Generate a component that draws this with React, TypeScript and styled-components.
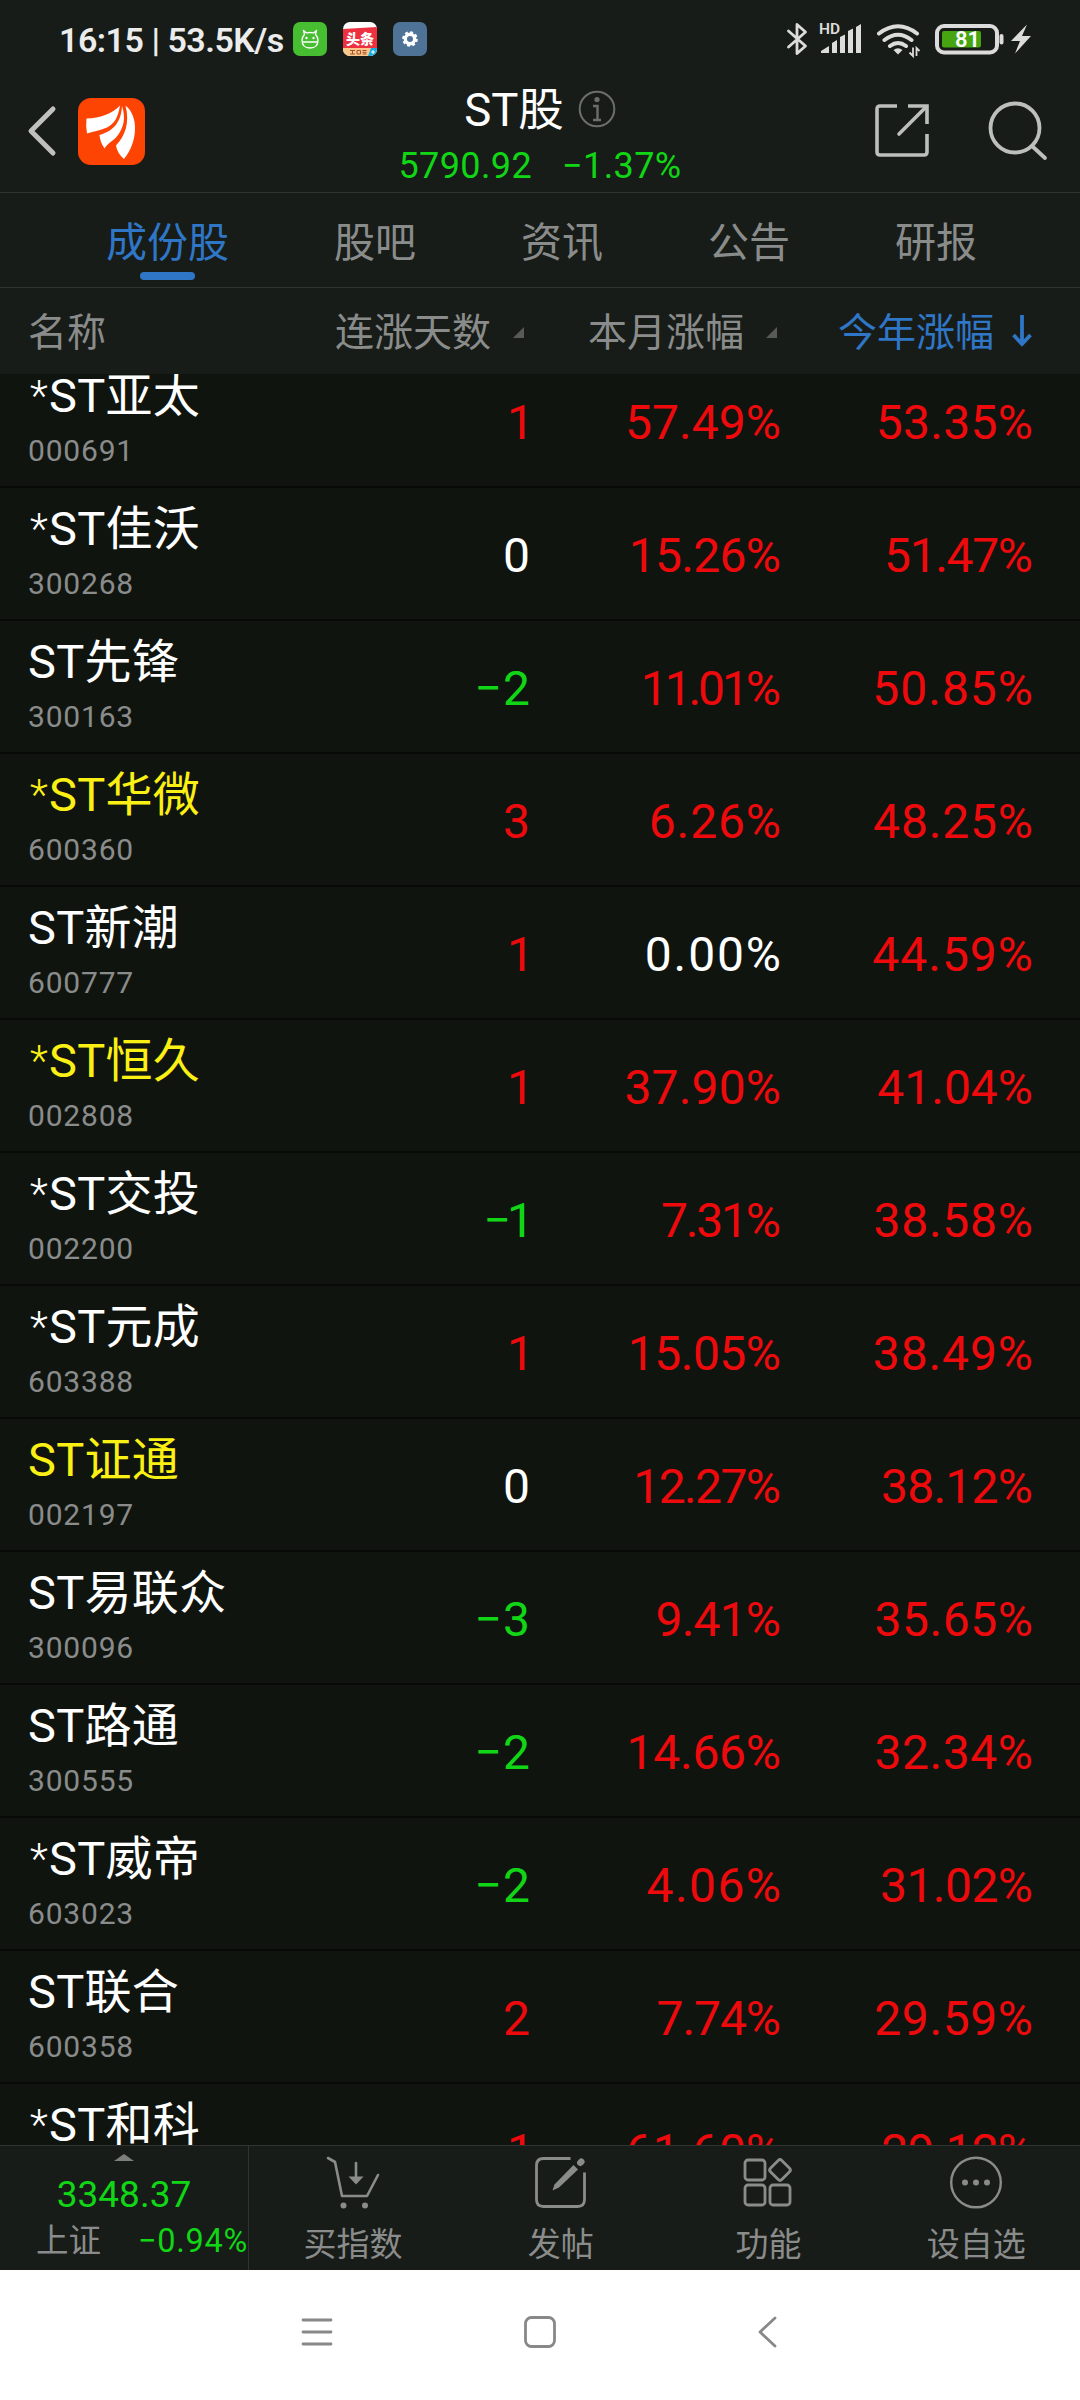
import React from "react";
import styled, { createGlobalStyle } from "styled-components";

const latin = `Roboto, "Noto Sans CJK SC", sans-serif`;
const RED = "#ee0a0c";
const GREEN = "#10d616";
const WHITE = "#ffffff";
const BLUE = "#2f76c6";
const GRAY = "#8a8c8b";
const LINE = "#303331";

const GlobalStyle = createGlobalStyle`
  * { box-sizing: border-box; }
  body { margin: 0; background: #181c18; font-family: ${latin}; }
  svg { display: block; flex: none; }
`;

const Screen = styled.div`
  width: 1080px;
  height: 2400px;
  display: flex;
  flex-direction: column;
  overflow: hidden;
  background: #181c18;
`;

const StatusBar = styled.div`
  height: 78px;
  flex: none;
  display: flex;
  align-items: center;
  justify-content: space-between;
  padding: 0 49px 0 59px;
`;

const StatusLeft = styled.div`
  display: flex;
  align-items: center;
  color: #ececec;
`;

const Clock = styled.span`
  width: 234px;
  padding-top: 1px;
  font-size: 34px;
  font-weight: 600;
  letter-spacing: -0.5px;
  line-height: 40px;
  white-space: nowrap;
`;

const AppIcons = styled.div`
  display: flex;
  gap: 16px;
`;

const TitleBar = styled.header`
  height: 115px;
  flex: none;
  display: grid;
  grid-template-columns: 1fr auto 1fr;
  border-bottom: 1px solid ${LINE};
`;

const TitleLeft = styled.div`
  display: flex;
  align-items: flex-start;
  gap: 21px;
  padding: 20px 0 0 27px;
`;

const TitleRight = styled.div`
  display: flex;
  align-items: flex-start;
  justify-content: flex-end;
  gap: 59px;
  padding: 23px 32px 0 0;
`;

const TitleMiddle = styled.div`
  display: flex;
  flex-direction: column;
  align-items: center;
`;

const TitleLine = styled.div`
  display: flex;
  align-items: center;
  gap: 14px;
  height: 62px;
`;

const Title = styled.h1`
  margin: 0;
  padding-top: 3px;
  font-size: 45.5px;
  font-weight: 400;
  line-height: 60px;
  color: ${WHITE};
`;

const IndexLine = styled.div`
  display: flex;
  gap: 30px;
  padding-top: 1px;
  font-size: 36px;
  letter-spacing: 0.4px;
  line-height: 50px;
  color: ${GREEN};
`;

const Tabs = styled.nav`
  height: 95px;
  flex: none;
  display: flex;
  gap: 105px;
  padding-left: 106px;
  border-bottom: 1px solid ${LINE};
`;

const Tab = styled.div`
  display: flex;
  flex-direction: column;
  align-items: center;
  padding-top: 20px;
  font-size: 41px;
  line-height: 60px;
  color: ${GRAY};
`;

const ActiveTab = styled(Tab)`
  color: ${BLUE};
`;

const Underline = styled.div`
  width: 55px;
  height: 8px;
  margin-top: -1px;
  border-radius: 4px;
  background: ${BLUE};
`;

const columns = `
  display: grid;
  grid-template-columns: 300px 227px 253px 252px;
`;

const TableHead = styled.div`
  ${columns}
  height: 86px;
  flex: none;
  align-items: center;
  padding-top: 3px;
  font-size: 39px;
  line-height: 56px;
  color: ${GRAY};
`;

const HeadCell = styled.div<{ $sorted?: boolean; $first?: boolean }>`
  display: flex;
  align-items: center;
  justify-content: ${(p) => (p.$first ? "flex-start" : "flex-end")};
  gap: ${(p) => (p.$sorted ? 18 : 22)}px;
  padding-left: ${(p) => (p.$first ? 28 : 0)}px;
  padding-right: ${(p) => (p.$first || p.$sorted ? 0 : 3)}px;
  white-space: nowrap;
  color: ${(p) => (p.$sorted ? BLUE : GRAY)};

  svg { margin-top: ${(p) => (p.$sorted ? -4 : -1)}px; }
`;

const List = styled.main`
  height: 1771px;
  flex: none;
  overflow: hidden;
  background: #10140f;
`;

const Rows = styled.div`
  margin-top: -19px;
`;

const Row = styled.div`
  ${columns}
  height: 133px;
  border-bottom: 2px solid #070a07;
`;

const NameCell = styled.div`
  padding: 8px 0 0 28px;
`;

const Name = styled.div<{ $marked?: boolean }>`
  display: flex;
  height: 66px;
  font-size: 47px;
  letter-spacing: 0.3px;
  line-height: 66px;
  white-space: nowrap;
  color: ${(p) => (p.$marked ? "#fbf014" : WHITE)};
`;

const Star = styled.span`
  width: 21px;
  padding-left: 2px;
  font-size: 42px;
  font-weight: 300;
`;

const Code = styled.div`
  padding-top: 1px;
  font-size: 30px;
  letter-spacing: 0.8px;
  line-height: 42px;
  color: ${GRAY};
`;

const Value = styled.div<{ $color: string; $track: number; $nudge: number }>`
  padding-top: 37px;
  margin-right: ${(p) => -p.$track - p.$nudge}px;
  text-align: right;
  font-size: 48px;
  line-height: 62px;
  letter-spacing: ${(p) => p.$track}px;
  color: ${(p) => p.$color};
  white-space: nowrap;
`;

const BottomBar = styled.footer`
  height: 125px;
  flex: none;
  display: grid;
  grid-template-columns: 249px repeat(4, 1fr);
  border-top: 1px solid ${LINE};
`;

const MarketBox = styled.div`
  display: flex;
  flex-direction: column;
  align-items: center;
  border-right: 1px solid ${LINE};
  padding-top: 8px;
`;

const MarketValue = styled.div`
  margin-top: 12px;
  font-size: 37px;
  line-height: 44px;
  color: ${GREEN};
`;

const MarketLine = styled.div`
  width: 100%;
  display: flex;
  align-items: center;
  justify-content: space-between;
  padding: 0 0 0 36px;
  line-height: 49px;
`;

const MarketName = styled.span`
  font-size: 32.5px;
  color: ${GRAY};
`;

const MarketChange = styled.span`
  font-size: 32.5px;
  letter-spacing: 0.7px;
  color: ${GREEN};
`;

const Action = styled.div`
  display: flex;
  flex-direction: column;
  align-items: center;
  gap: 10px;
  padding-top: 10px;
  font-size: 33px;
  line-height: 50px;
  color: ${GRAY};
`;

const SystemNav = styled.div`
  height: 130px;
  flex: none;
  display: flex;
  align-items: center;
  gap: 191px;
  padding: 0 0 6px 301px;
  background: #fff;
`;

type Stock = { name: string; code?: string; days: number; month: string; year: string; marked?: boolean };

const stocks: Stock[] = [
  { name: "*ST亚太", code: "000691", days: 1, month: "57.49%", year: "53.35%" },
  { name: "*ST佳沃", code: "300268", days: 0, month: "15.26%", year: "51.47%" },
  { name: "ST先锋", code: "300163", days: -2, month: "11.01%", year: "50.85%" },
  { name: "*ST华微", code: "600360", days: 3, month: "6.26%", year: "48.25%", marked: true },
  { name: "ST新潮", code: "600777", days: 1, month: "0.00%", year: "44.59%" },
  { name: "*ST恒久", code: "002808", days: 1, month: "37.90%", year: "41.04%", marked: true },
  { name: "*ST交投", code: "002200", days: -1, month: "7.31%", year: "38.58%" },
  { name: "*ST元成", code: "603388", days: 1, month: "15.05%", year: "38.49%" },
  { name: "ST证通", code: "002197", days: 0, month: "12.27%", year: "38.12%", marked: true },
  { name: "ST易联众", code: "300096", days: -3, month: "9.41%", year: "35.65%" },
  { name: "ST路通", code: "300555", days: -2, month: "14.66%", year: "32.34%" },
  { name: "*ST威帝", code: "603023", days: -2, month: "4.06%", year: "31.02%" },
  { name: "ST联合", code: "600358", days: 2, month: "7.74%", year: "29.59%" },
  { name: "*ST和科", days: 1, month: "61.60%", year: "29.12%" },
];

const tone = (n: number) => (n > 0 ? RED : n < 0 ? GREEN : WHITE);

// Optical width correction of each digit, in pixels, spread over the whole figure.
const digitAdjust: Record<string, number> = {
  "0": 2.5, "1": -6, "2": 0.5, "3": 0.3, "4": 1.7, "5": 0.5, "6": 1.5, "7": -3, "8": 1.5, "9": 1,
};

function Percent({ text }: { text: string }) {
  const total = [...text].reduce((sum, c) => sum + (digitAdjust[c] ?? 0), 0);
  return (
    <Value $color={tone(parseFloat(text))} $track={total / (text.length - 1)} $nudge={1}>
      {text}
    </Value>
  );
}

function Days({ n }: { n: number }) {
  const one = Math.abs(n) === 1;
  return (
    <Value $color={tone(n)} $track={n === -1 ? -4 : n < 0 ? 1 : 0} $nudge={one ? 7 : 3}>
      {String(n).replace("-", "−")}
    </Value>
  );
}

const SortMark = () => (
  <svg width="11" height="11" viewBox="0 0 11 11">
    <path d="M11 0V11H0Z" fill="#585a59" />
  </svg>
);

const StatusIcons = () => (
  <svg width="250" height="40" viewBox="0 0 250 40" fill="none">
    <path d="M7.5 12 24.5 27 16 34.5V5.5L24.5 13 7.5 28" stroke="#dcdcdc" strokeWidth="2.8" strokeLinejoin="round" strokeLinecap="round" />
    <text x="38" y="15" fill="#dcdcdc" fontSize="15.5" fontWeight="600" fontFamily="Roboto, sans-serif">HD</text>
    <path d="M40 34V32L48 27V34ZM51 34V24L56 21V34ZM59 34V18L64 15.5V34ZM67 34V12L72 9.5V34ZM75 34V8L80 5V34Z" fill="#dcdcdc" />
    <path d="M98 14.5Q117 0 136 14.5M103.500 21Q117 10.500 130.500 21M109 27Q117 21 125 27" stroke="#dcdcdc" strokeWidth="4" strokeLinecap="round" />
    <path d="M112.500 31Q117 27.500 121.500 31L117 35.500Z" fill="#dcdcdc" />
    <path d="M132 28.500V37L128.500 33.500M135.500 37V29L138.500 32" stroke="#dcdcdc" strokeWidth="1.8" />
    <rect x="156" y="7" width="60" height="26.500" rx="7" stroke="#dcdcdc" strokeWidth="4" />
    <rect x="161" y="12" width="39" height="16.500" rx="2" fill="#46a510" />
    <rect x="218.500" y="15" width="4" height="10.500" rx="2" fill="#dcdcdc" />
    <text x="186.500" y="28.300" textAnchor="middle" fill="#fff" fontSize="22" fontWeight="600" fontFamily="Roboto, sans-serif">81</text>
    <path d="M246 5.500 230 22H239L234 34.500 250 17H241Z" fill="#dcdcdc" />
  </svg>
);

const AndroidIcon = () => (
  <svg width="34" height="34" viewBox="0 0 34 34" fill="none">
    <rect width="34" height="34" rx="7" fill="#47bd31" />
    <path d="M10.500 8.500 11.500 12.500Q9 15 9 18Q9 26 17 26Q25 26 25 18Q25 15 22.500 12.500L23.500 8.500 20.500 11Q17 10 13.500 11ZM9 20H25" stroke="#fff" strokeWidth="1.3" strokeLinejoin="round" />
    <circle cx="13.500" cy="16" r="1.200" fill="#fff" />
    <circle cx="20.500" cy="16" r="1.200" fill="#fff" />
  </svg>
);

const NewsIcon = () => (
  <svg width="34" height="34" viewBox="0 0 34 34">
    <defs>
      <clipPath id="news">
        <rect width="34" height="34" rx="7" />
      </clipPath>
    </defs>
    <g clipPath="url(#news)">
      <rect width="34" height="34" fill="#fff" />
      <path d="M0 7 34 5V27H0Z" fill="#ee3140" />
      <rect y="26" width="34" height="8" fill="#fac88c" />
      <path d="M28 26H34V34H25Z" fill="#13aee0" />
      <path d="M28 30H32M30 28V32" stroke="#fff" strokeWidth="1" />
      <path d="M7 28.500H12M9.500 28.500V32M7 32H12M14 28.500H17.500V32H14ZM19.500 28.500H23.500M19.500 30.300H23.500M19.500 32H23.500" stroke="#a8502e" strokeWidth="1" fill="none" />
    </g>
    <text x="17" y="22" textAnchor="middle" fill="#fff" fontSize="14" fontWeight="800" fontFamily="Noto Sans CJK SC, sans-serif">头条</text>
  </svg>
);

const GearIcon = () => (
  <svg width="34" height="34" viewBox="0 0 34 34" fill="none">
    <rect width="34" height="34" rx="7" fill="#4f7396" />
    <circle cx="17" cy="17" r="4.700" stroke="#fff" strokeWidth="3.400" />
    <circle cx="17" cy="17" r="6.800" stroke="#fff" strokeWidth="2" strokeDasharray="2.900 2.440" />
  </svg>
);

const BrandLogo = () => (
  <svg width="67" height="67" viewBox="0 0 67 67">
    <rect width="67" height="67" rx="13" fill="#fd4403" />
    <path d="M8.500 20.500C22 20 34 16 42 7.500C40 20 36 26 29 29.500C23 32.500 16 33 9 35.500Q7.500 28 8.500 20.500Z" fill="#fff" />
    <path d="M21.500 37C35 33 43 25 44 8C48 20 46 30 38 39.500C34 43.500 29 46 26.500 50.500Q22 44 21.500 37Z" fill="#fff" />
    <path d="M38 47.500C47 38 52 25 47.500 7.500C61 18 60 44 46 61Q39 55 38 47.500Z" fill="#fff" />
  </svg>
);

export default function App() {
  return (
    <>
      <GlobalStyle />
      <Screen>
        <StatusBar>
          <StatusLeft>
            <Clock>16:15 | 53.5K/s</Clock>
            <AppIcons>
              <AndroidIcon />
              <NewsIcon />
              <GearIcon />
            </AppIcons>
          </StatusLeft>
          <StatusIcons />
        </StatusBar>

        <TitleBar>
          <TitleLeft>
            <svg width="30" height="67" viewBox="0 0 30 67" fill="none">
              <path d="M26 11 4 33 26 55" stroke="#c0c0c0" strokeWidth="5" strokeLinecap="round" strokeLinejoin="round" />
            </svg>
            <BrandLogo />
          </TitleLeft>
          <TitleMiddle>
            <TitleLine>
              <Title>ST股</Title>
              <svg width="38" height="38" viewBox="0 0 38 38" fill="none" stroke="#6c6e6d">
                <circle cx="19" cy="19" r="17.3" strokeWidth="2" />
                <circle cx="19" cy="9.5" r="2.6" fill="#6c6e6d" stroke="none" />
                <path d="M15 16H19.5V29M15 30H23" strokeWidth="2.4" />
              </svg>
            </TitleLine>
            <IndexLine>
              <span>5790.92</span>
              <span>−1.37%</span>
            </IndexLine>
          </TitleMiddle>
          <TitleRight>
            <svg width="54" height="60" viewBox="0 0 54 60" fill="none" stroke="#bdbfbd" strokeWidth="3.6">
              <path d="M22 5H5Q2 5 2 8V51Q2 54 5 54H49Q52 54 52 51V33M33 5H52V23" />
              <path d="M51 6 24 33" strokeLinecap="round" />
            </svg>
            <svg width="60" height="62" viewBox="0 0 60 62" fill="none" stroke="#bdbfbd" strokeWidth="3.8" strokeLinecap="round">
              <circle cx="27" cy="27" r="24.5" />
              <path d="M44 45 57 57" />
            </svg>
          </TitleRight>
        </TitleBar>

        <Tabs>
          <ActiveTab>
            成份股
            <Underline />
          </ActiveTab>
          <Tab>股吧</Tab>
          <Tab>资讯</Tab>
          <Tab>公告</Tab>
          <Tab>研报</Tab>
        </Tabs>

        <TableHead>
          <HeadCell $first>名称</HeadCell>
          <HeadCell>
            连涨天数
            <SortMark />
          </HeadCell>
          <HeadCell>
            本月涨幅
            <SortMark />
          </HeadCell>
          <HeadCell $sorted>
            今年涨幅
            <svg width="20" height="32" viewBox="0 0 20 32" fill="none" stroke={BLUE} strokeWidth="3.8">
              <path d="M10 0V29M1.5 20 10 29 18.5 20" />
            </svg>
          </HeadCell>
        </TableHead>

        <List>
          <Rows>
            {stocks.map((s) => (
              <Row key={s.name}>
                <NameCell>
                  <Name $marked={s.marked}>
                    {s.name.startsWith("*") && <Star>*</Star>}
                    {s.name.replace("*", "")}
                  </Name>
                  {s.code && <Code>{s.code}</Code>}
                </NameCell>
                <Days n={s.days} />
                <Percent text={s.month} />
                <Percent text={s.year} />
              </Row>
            ))}
          </Rows>
        </List>

        <BottomBar>
          <MarketBox>
            <svg width="20" height="7" viewBox="0 0 20 7">
              <path d="M10 0 20 7H0Z" fill="#7d7f7e" />
            </svg>
            <MarketValue>3348.37</MarketValue>
            <MarketLine>
              <MarketName>上证</MarketName>
              <MarketChange>−0.94%</MarketChange>
            </MarketLine>
          </MarketBox>
          <Action>
            <svg width="54" height="54" viewBox="0 0 54 54" fill="none" stroke="#8a8c8b" strokeWidth="2.6" strokeLinecap="round">
              <path d="M2 2 9 6 16 40H41L52 19" strokeLinejoin="round" />
              <path d="M30 7V22" />
              <path d="M22.5 20.5H37.5L30 28.5Z" fill="#8a8c8b" stroke="none" />
              <circle cx="17.5" cy="49.5" r="3" fill="#8a8c8b" stroke="none" />
              <circle cx="39" cy="49.5" r="3" fill="#8a8c8b" stroke="none" />
            </svg>
            买指数
          </Action>
          <Action>
            <svg width="54" height="54" viewBox="0 0 54 54" fill="none" stroke="#8a8c8b" strokeWidth="2.8">
              <path d="M36.5 2.500H9.500Q2.500 2.500 2.500 9.500V43.500Q2.500 50.500 9.500 50.500H43.500Q50.500 50.500 50.500 43.500V16.500" />
              <path d="M39.500 9 44 13.500 25 31.500 18.500 34.500 20.500 28.500Z" fill="#8a8c8b" stroke="none" />
              <path d="M46.300 6.700 47.300 5.700" strokeWidth="6.500" strokeLinecap="round" />
            </svg>
            发帖
          </Action>
          <Action>
            <svg width="54" height="54" viewBox="0 0 54 54" fill="none" stroke="#8a8c8b" strokeWidth="2.8">
              <rect x="4" y="4" width="20" height="20" rx="3" />
              <rect x="4" y="29" width="20" height="20" rx="3" />
              <rect x="29" y="29" width="20" height="20" rx="3" />
              <rect x="31" y="6" width="16" height="16" rx="2.5" transform="rotate(45 39 14)" />
            </svg>
            功能
          </Action>
          <Action>
            <svg width="54" height="54" viewBox="0 0 54 54" fill="none" stroke="#8a8c8b" strokeWidth="2.4">
              <circle cx="27" cy="26.5" r="24.8" />
              <g fill="#8a8c8b" stroke="none">
                <circle cx="16" cy="26.5" r="3" />
                <circle cx="27" cy="26.5" r="3" />
                <circle cx="38" cy="26.5" r="3" />
              </g>
            </svg>
            设自选
          </Action>
        </BottomBar>

        <SystemNav>
          <svg width="32" height="32" viewBox="0 0 32 32" stroke="#888" strokeWidth="2.8" strokeLinecap="round">
            <path d="M2 4H30M2 16H30M2 28H30" />
          </svg>
          <svg width="32" height="32" viewBox="0 0 32 32" fill="none" stroke="#888" strokeWidth="2.8">
            <rect x="1.5" y="1.5" width="29" height="29" rx="6" />
          </svg>
          <svg width="32" height="32" viewBox="0 0 32 32" fill="none" stroke="#888" strokeWidth="2.8" strokeLinecap="round" strokeLinejoin="round">
            <path d="M28 2 13 16 28 30" />
          </svg>
        </SystemNav>
      </Screen>
    </>
  );
}
